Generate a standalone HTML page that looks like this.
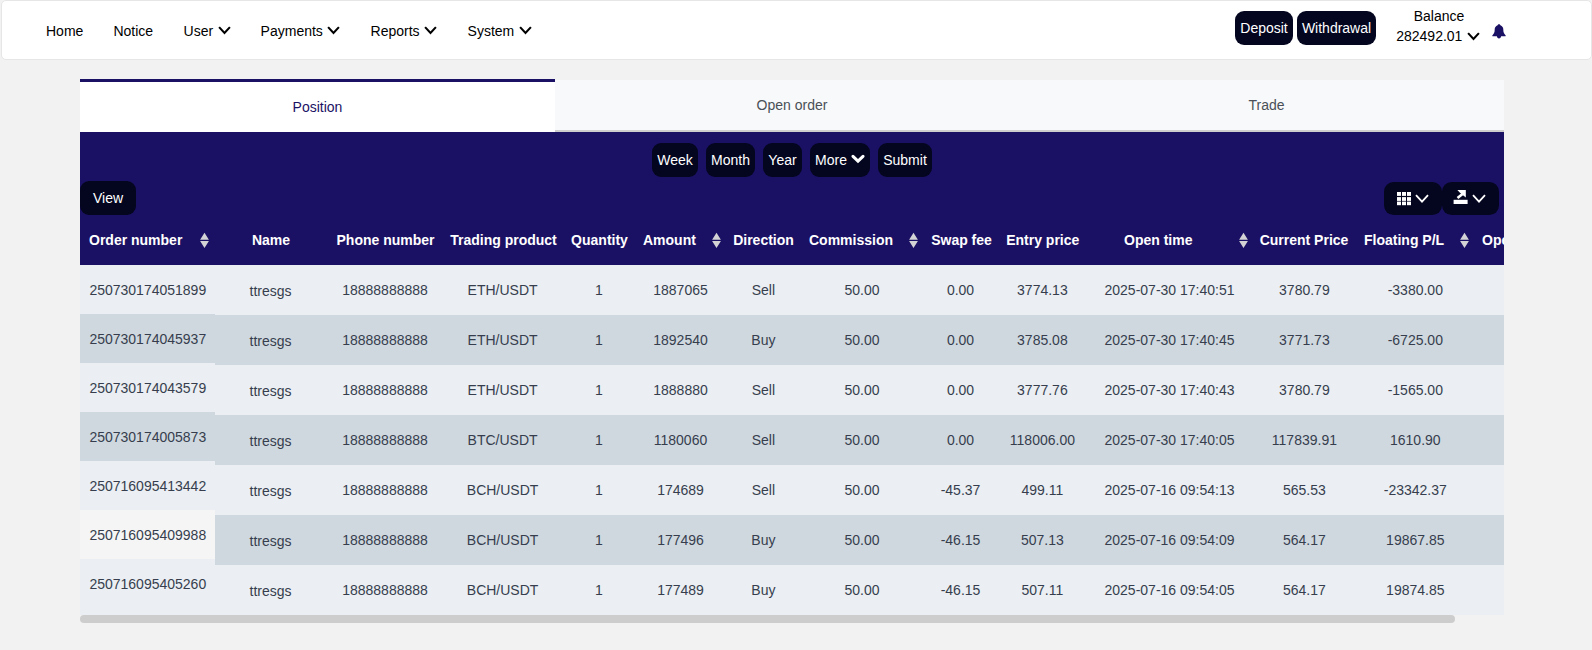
<!DOCTYPE html>
<html lang="en">
<head>
<meta charset="utf-8">
<title>Position</title>
<style>
*{box-sizing:border-box}
html,body{margin:0;padding:0}
body{width:1592px;height:650px;overflow:hidden;background:#f2f2f2;font-family:"Liberation Sans",Arial,sans-serif;font-size:14px;color:#000;position:relative}
.nav{position:absolute;left:1px;top:0;width:1591px;height:60px;background:#fff;border:1px solid #e6e6e6;border-radius:5px}
.navi .it{position:absolute;top:0;height:60px;line-height:62px;font-size:14px;color:#000;white-space:nowrap}
.navi{position:absolute;left:0;top:0;width:1592px;height:60px}
.chev{display:inline-block;vertical-align:middle;position:relative;top:-1.7px;margin-left:0.5px}
.btn{position:absolute;background:#040620;color:#fff;border-radius:9px;font-size:14px;text-align:center;white-space:nowrap}
.tabs{position:absolute;left:80px;top:79px;width:1424px;height:53px}
.tab{position:absolute;font-size:14px;text-align:center;color:#495057}
.tab.on{left:0;top:0;width:475px;height:53px;background:#fff;border-top:3px solid #1b1164;color:#1b1164;line-height:50px}
.tab.off{top:1px;height:52px;background:#f8f9fa;border-bottom:2px solid #cecece;line-height:50px}
.panel{position:absolute;left:80px;top:132px;width:1424px;height:133px;background:#1b1164}
.panel .btn{background:#040620}
.th{position:absolute;top:232px;font-weight:bold;font-size:14px;color:#fff;white-space:nowrap;line-height:16px;transform:translateX(-50%)}
.th.l{transform:none}
.sort{position:absolute;top:232.3px}
.rows{position:absolute;left:80px;top:265px;width:1424px;height:350px;overflow:hidden}
.row{position:absolute;left:0;width:1424px;height:50px}
.row.a{background:#ebeef2}
.row.b{background:#d0d8df}
.c{position:absolute;top:0;height:50px;line-height:51px;font-size:14px;color:#363e4e;white-space:nowrap;transform:translateX(-50%)}
.fix{position:absolute;left:80px;top:265px;width:135px;height:350px}
.fr{position:absolute;left:0;width:135px;height:49px;line-height:50px;padding-left:9.4px;font-size:14px;color:#363e4e}
.sb{position:absolute;left:80px;top:615px;width:1375px;height:8px;background:#cdcdcd;border-radius:4px}
.hd{position:absolute;left:0;top:0;width:1504px;height:265px;overflow:hidden;pointer-events:none}
</style>
</head>
<body>
<div class="nav"></div>
<div class="navi">
  <span class="it" style="left:46px">Home</span>
  <span class="it" style="left:113.4px">Notice</span>
  <span class="it" style="left:183.6px">User <svg class="chev" width="13" height="9" viewBox="0 0 13 9"><path d="M1.1 1.1 L6.5 6.9 L11.9 1.1" fill="none" stroke="#000" stroke-width="2.1"/></svg></span>
  <span class="it" style="left:260.6px">Payments <svg class="chev" width="13" height="9" viewBox="0 0 13 9"><path d="M1.1 1.1 L6.5 6.9 L11.9 1.1" fill="none" stroke="#000" stroke-width="2.1"/></svg></span>
  <span class="it" style="left:370.6px">Reports <svg class="chev" width="13" height="9" viewBox="0 0 13 9"><path d="M1.1 1.1 L6.5 6.9 L11.9 1.1" fill="none" stroke="#000" stroke-width="2.1"/></svg></span>
  <span class="it" style="left:467.6px">System <svg class="chev" width="13" height="9" viewBox="0 0 13 9"><path d="M1.1 1.1 L6.5 6.9 L11.9 1.1" fill="none" stroke="#000" stroke-width="2.1"/></svg></span>
  <div class="btn" style="left:1235px;top:11px;width:58px;height:34px;line-height:34px">Deposit</div>
  <div class="btn" style="left:1297px;top:11px;width:79px;height:34px;line-height:34px">Withdrawal</div>
  <div style="position:absolute;left:1380px;top:6px;width:118px;text-align:center;font-size:14px;line-height:20px">Balance</div>
  <div style="position:absolute;left:1379px;top:26px;width:118px;text-align:center;font-size:14px;line-height:20px">282492.01 <span style="position:relative;left:0.6px;top:0.6px"><svg class="chev" width="13" height="9" viewBox="0 0 13 9"><path d="M1.1 1.1 L6.5 6.9 L11.9 1.1" fill="none" stroke="#000" stroke-width="2.1"/></svg></span></div>
  <svg style="position:absolute;left:1492px;top:23.5px" width="14" height="15" viewBox="0 0 14 15"><path d="M7 0.2 C8 0.2 8.3 0.9 8.4 1.3 C10.3 1.9 11.3 3.600 11.3 5.600 C11.3 8.5 12 9.8 13.5 11.2 C13.9 11.600 13.7 12.3 13.1 12.3 H0.9 C0.3 12.3 0.1 11.600 0.5 11.2 C2 9.8 2.7 8.5 2.7 5.600 C2.7 3.600 3.7 1.9 5.600 1.3 C5.7 0.9 6 0.2 7 0.2 Z M4.9 12.3 H9.1 C9.1 13.5 8.2 14.4 7 14.4 C5.8 14.4 4.9 13.5 4.9 12.3 Z" fill="#1b1164"/></svg>
</div>

<div class="tabs">
  <div class="tab on">Position</div>
  <div class="tab off" style="left:475px;width:474px">Open order</div>
  <div class="tab off" style="left:949px;width:475px">Trade</div>
</div>

<div class="panel">
  <div class="btn" style="left:572px;top:11px;width:46px;height:34px;line-height:34px">Week</div>
  <div class="btn" style="left:626px;top:11px;width:49px;height:34px;line-height:34px">Month</div>
  <div class="btn" style="left:683px;top:11px;width:39px;height:34px;line-height:34px">Year</div>
  <div class="btn" style="left:730px;top:11px;width:60px;height:34px;line-height:34px">More <svg style="display:inline-block;vertical-align:middle;position:relative;top:-2.5px" width="14" height="10" viewBox="0 0 14 10"><path d="M2 2.3 L7 7.1 L12 2.3" fill="none" stroke="#fff" stroke-width="3" stroke-linecap="round" stroke-linejoin="miter"/></svg></div>
  <div class="btn" style="left:798px;top:11px;width:54px;height:34px;line-height:34px">Submit</div>
  <div class="btn" style="left:0;top:49px;width:56px;height:34px;line-height:34px">View</div>
  <div class="btn" style="left:1304px;top:50px;width:58px;height:33px;border-radius:9.5px"><svg style="position:absolute;left:13px;top:10px" width="14" height="14" viewBox="0 0 14 14" fill="#fff"><rect x="0" y="0" width="4" height="3.9"/><rect x="0" y="5.1" width="4" height="3.8"/><rect x="0" y="9.6" width="4" height="3.6"/><rect x="5" y="0" width="4" height="3.9"/><rect x="5" y="5.1" width="4" height="3.8"/><rect x="5" y="9.6" width="4" height="3.6"/><rect x="10" y="0" width="4" height="3.9"/><rect x="10" y="5.1" width="4" height="3.8"/><rect x="10" y="9.6" width="4" height="3.6"/></svg><svg style="position:absolute;left:31.4px;top:12.1px" width="14" height="10" viewBox="0 0 14 10"><path d="M1 1.2 L7 7.6 L13 1.2" fill="none" stroke="#fff" stroke-width="1.8"/></svg></div>
  <div class="btn" style="left:1362px;top:50px;width:57px;height:33px;border-radius:9.5px"><svg style="position:absolute;left:11px;top:7px" width="16" height="16" viewBox="0 0 16 16" fill="#fff"><rect x="0.600" y="10.800" width="14" height="4.200"/><polygon points="4.4,1.1 12.8,1.1 12.8,8.600 10.600,6.800 9,5.400 6.500,3.200"/><path d="M9.500 5 L4.500 9" stroke="#fff" stroke-width="2.600" fill="none"/></svg><svg style="position:absolute;left:30.4px;top:12.1px" width="14" height="10" viewBox="0 0 14 10"><path d="M1 1.2 L7 7.6 L13 1.2" fill="none" stroke="#fff" stroke-width="1.8"/></svg></div>
</div>

<div class="rows">
<div class="row a" style="top:0px"><span class="c" style="left:190.5px;top:1px">ttresgs</span><span class="c" style="left:305px">18888888888</span><span class="c" style="left:422.6px">ETH/USDT</span><span class="c" style="left:519px">1</span><span class="c" style="left:600.5px">1887065</span><span class="c" style="left:683.4px">Sell</span><span class="c" style="left:782px">50.00</span><span class="c" style="left:880.5px">0.00</span><span class="c" style="left:962.4000000000001px">3774.13</span><span class="c" style="left:1089.5px">2025-07-30 17:40:51</span><span class="c" style="left:1224.4px">3780.79</span><span class="c" style="left:1335.3px">-3380.00</span></div>
<div class="row b" style="top:50px"><span class="c" style="left:190.5px;top:1px">ttresgs</span><span class="c" style="left:305px">18888888888</span><span class="c" style="left:422.6px">ETH/USDT</span><span class="c" style="left:519px">1</span><span class="c" style="left:600.5px">1892540</span><span class="c" style="left:683.4px">Buy</span><span class="c" style="left:782px">50.00</span><span class="c" style="left:880.5px">0.00</span><span class="c" style="left:962.4000000000001px">3785.08</span><span class="c" style="left:1089.5px">2025-07-30 17:40:45</span><span class="c" style="left:1224.4px">3771.73</span><span class="c" style="left:1335.3px">-6725.00</span></div>
<div class="row a" style="top:100px"><span class="c" style="left:190.5px;top:1px">ttresgs</span><span class="c" style="left:305px">18888888888</span><span class="c" style="left:422.6px">ETH/USDT</span><span class="c" style="left:519px">1</span><span class="c" style="left:600.5px">1888880</span><span class="c" style="left:683.4px">Sell</span><span class="c" style="left:782px">50.00</span><span class="c" style="left:880.5px">0.00</span><span class="c" style="left:962.4000000000001px">3777.76</span><span class="c" style="left:1089.5px">2025-07-30 17:40:43</span><span class="c" style="left:1224.4px">3780.79</span><span class="c" style="left:1335.3px">-1565.00</span></div>
<div class="row b" style="top:150px"><span class="c" style="left:190.5px;top:1px">ttresgs</span><span class="c" style="left:305px">18888888888</span><span class="c" style="left:422.6px">BTC/USDT</span><span class="c" style="left:519px">1</span><span class="c" style="left:600.5px">1180060</span><span class="c" style="left:683.4px">Sell</span><span class="c" style="left:782px">50.00</span><span class="c" style="left:880.5px">0.00</span><span class="c" style="left:962.4000000000001px">118006.00</span><span class="c" style="left:1089.5px">2025-07-30 17:40:05</span><span class="c" style="left:1224.4px">117839.91</span><span class="c" style="left:1335.3px">1610.90</span></div>
<div class="row a" style="top:200px"><span class="c" style="left:190.5px;top:1px">ttresgs</span><span class="c" style="left:305px">18888888888</span><span class="c" style="left:422.6px">BCH/USDT</span><span class="c" style="left:519px">1</span><span class="c" style="left:600.5px">174689</span><span class="c" style="left:683.4px">Sell</span><span class="c" style="left:782px">50.00</span><span class="c" style="left:880.5px">-45.37</span><span class="c" style="left:962.4000000000001px">499.11</span><span class="c" style="left:1089.5px">2025-07-16 09:54:13</span><span class="c" style="left:1224.4px">565.53</span><span class="c" style="left:1335.3px">-23342.37</span></div>
<div class="row b" style="top:250px"><span class="c" style="left:190.5px;top:1px">ttresgs</span><span class="c" style="left:305px">18888888888</span><span class="c" style="left:422.6px">BCH/USDT</span><span class="c" style="left:519px">1</span><span class="c" style="left:600.5px">177496</span><span class="c" style="left:683.4px">Buy</span><span class="c" style="left:782px">50.00</span><span class="c" style="left:880.5px">-46.15</span><span class="c" style="left:962.4000000000001px">507.13</span><span class="c" style="left:1089.5px">2025-07-16 09:54:09</span><span class="c" style="left:1224.4px">564.17</span><span class="c" style="left:1335.3px">19867.85</span></div>
<div class="row a" style="top:300px"><span class="c" style="left:190.5px;top:1px">ttresgs</span><span class="c" style="left:305px">18888888888</span><span class="c" style="left:422.6px">BCH/USDT</span><span class="c" style="left:519px">1</span><span class="c" style="left:600.5px">177489</span><span class="c" style="left:683.4px">Buy</span><span class="c" style="left:782px">50.00</span><span class="c" style="left:880.5px">-46.15</span><span class="c" style="left:962.4000000000001px">507.11</span><span class="c" style="left:1089.5px">2025-07-16 09:54:05</span><span class="c" style="left:1224.4px">564.17</span><span class="c" style="left:1335.3px">19874.85</span></div>
</div>
<div class="hd"><span class="th l" style="left:89px">Order number</span><span class="th " style="left:271px">Name</span><span class="th " style="left:385.5px">Phone number</span><span class="th " style="left:503.5px">Trading product</span><span class="th " style="left:599.5px">Quantity</span><span class="th l" style="left:643px">Amount</span><span class="th " style="left:763.5px">Direction</span><span class="th l" style="left:809px">Commission</span><span class="th " style="left:961.5px">Swap fee</span><span class="th " style="left:1042.75px">Entry price</span><span class="th l" style="left:1124px">Open time</span><span class="th " style="left:1304px">Current Price</span><span class="th l" style="left:1364px">Floating P/L</span><span class="th l" style="left:1482px">Ope</span><svg class="sort" style="left:200px" width="9" height="16" viewBox="0 0 9 16"><path d="M4.5 0.8 L8.9 7.7 H0.1 Z M4.5 16 L0.1 8.9 H8.900 Z" fill="#d3d3d6"/></svg><svg class="sort" style="left:712px" width="9" height="16" viewBox="0 0 9 16"><path d="M4.5 0.8 L8.9 7.7 H0.1 Z M4.5 16 L0.1 8.9 H8.900 Z" fill="#d3d3d6"/></svg><svg class="sort" style="left:909px" width="9" height="16" viewBox="0 0 9 16"><path d="M4.5 0.8 L8.9 7.7 H0.1 Z M4.5 16 L0.1 8.9 H8.900 Z" fill="#d3d3d6"/></svg><svg class="sort" style="left:1239px" width="9" height="16" viewBox="0 0 9 16"><path d="M4.5 0.8 L8.9 7.7 H0.1 Z M4.5 16 L0.1 8.9 H8.900 Z" fill="#d3d3d6"/></svg><svg class="sort" style="left:1460px" width="9" height="16" viewBox="0 0 9 16"><path d="M4.5 0.8 L8.9 7.7 H0.1 Z M4.5 16 L0.1 8.9 H8.900 Z" fill="#d3d3d6"/></svg></div>
<div class="fix">
<div class="fr" style="top:0px;background:#ebeef2">250730174051899</div>
<div class="fr" style="top:49px;background:#d0d8df">250730174045937</div>
<div class="fr" style="top:98px;background:#ebeef2">250730174043579</div>
<div class="fr" style="top:147px;background:#d0d8df">250730174005873</div>
<div class="fr" style="top:196px;background:#ebeef2">250716095413442</div>
<div class="fr" style="top:245px;background:#f5f5f5">250716095409988</div>
<div class="fr" style="top:294px;background:#ebeef2">250716095405260</div>
</div>
<div class="sb"></div>
</body>
</html>
